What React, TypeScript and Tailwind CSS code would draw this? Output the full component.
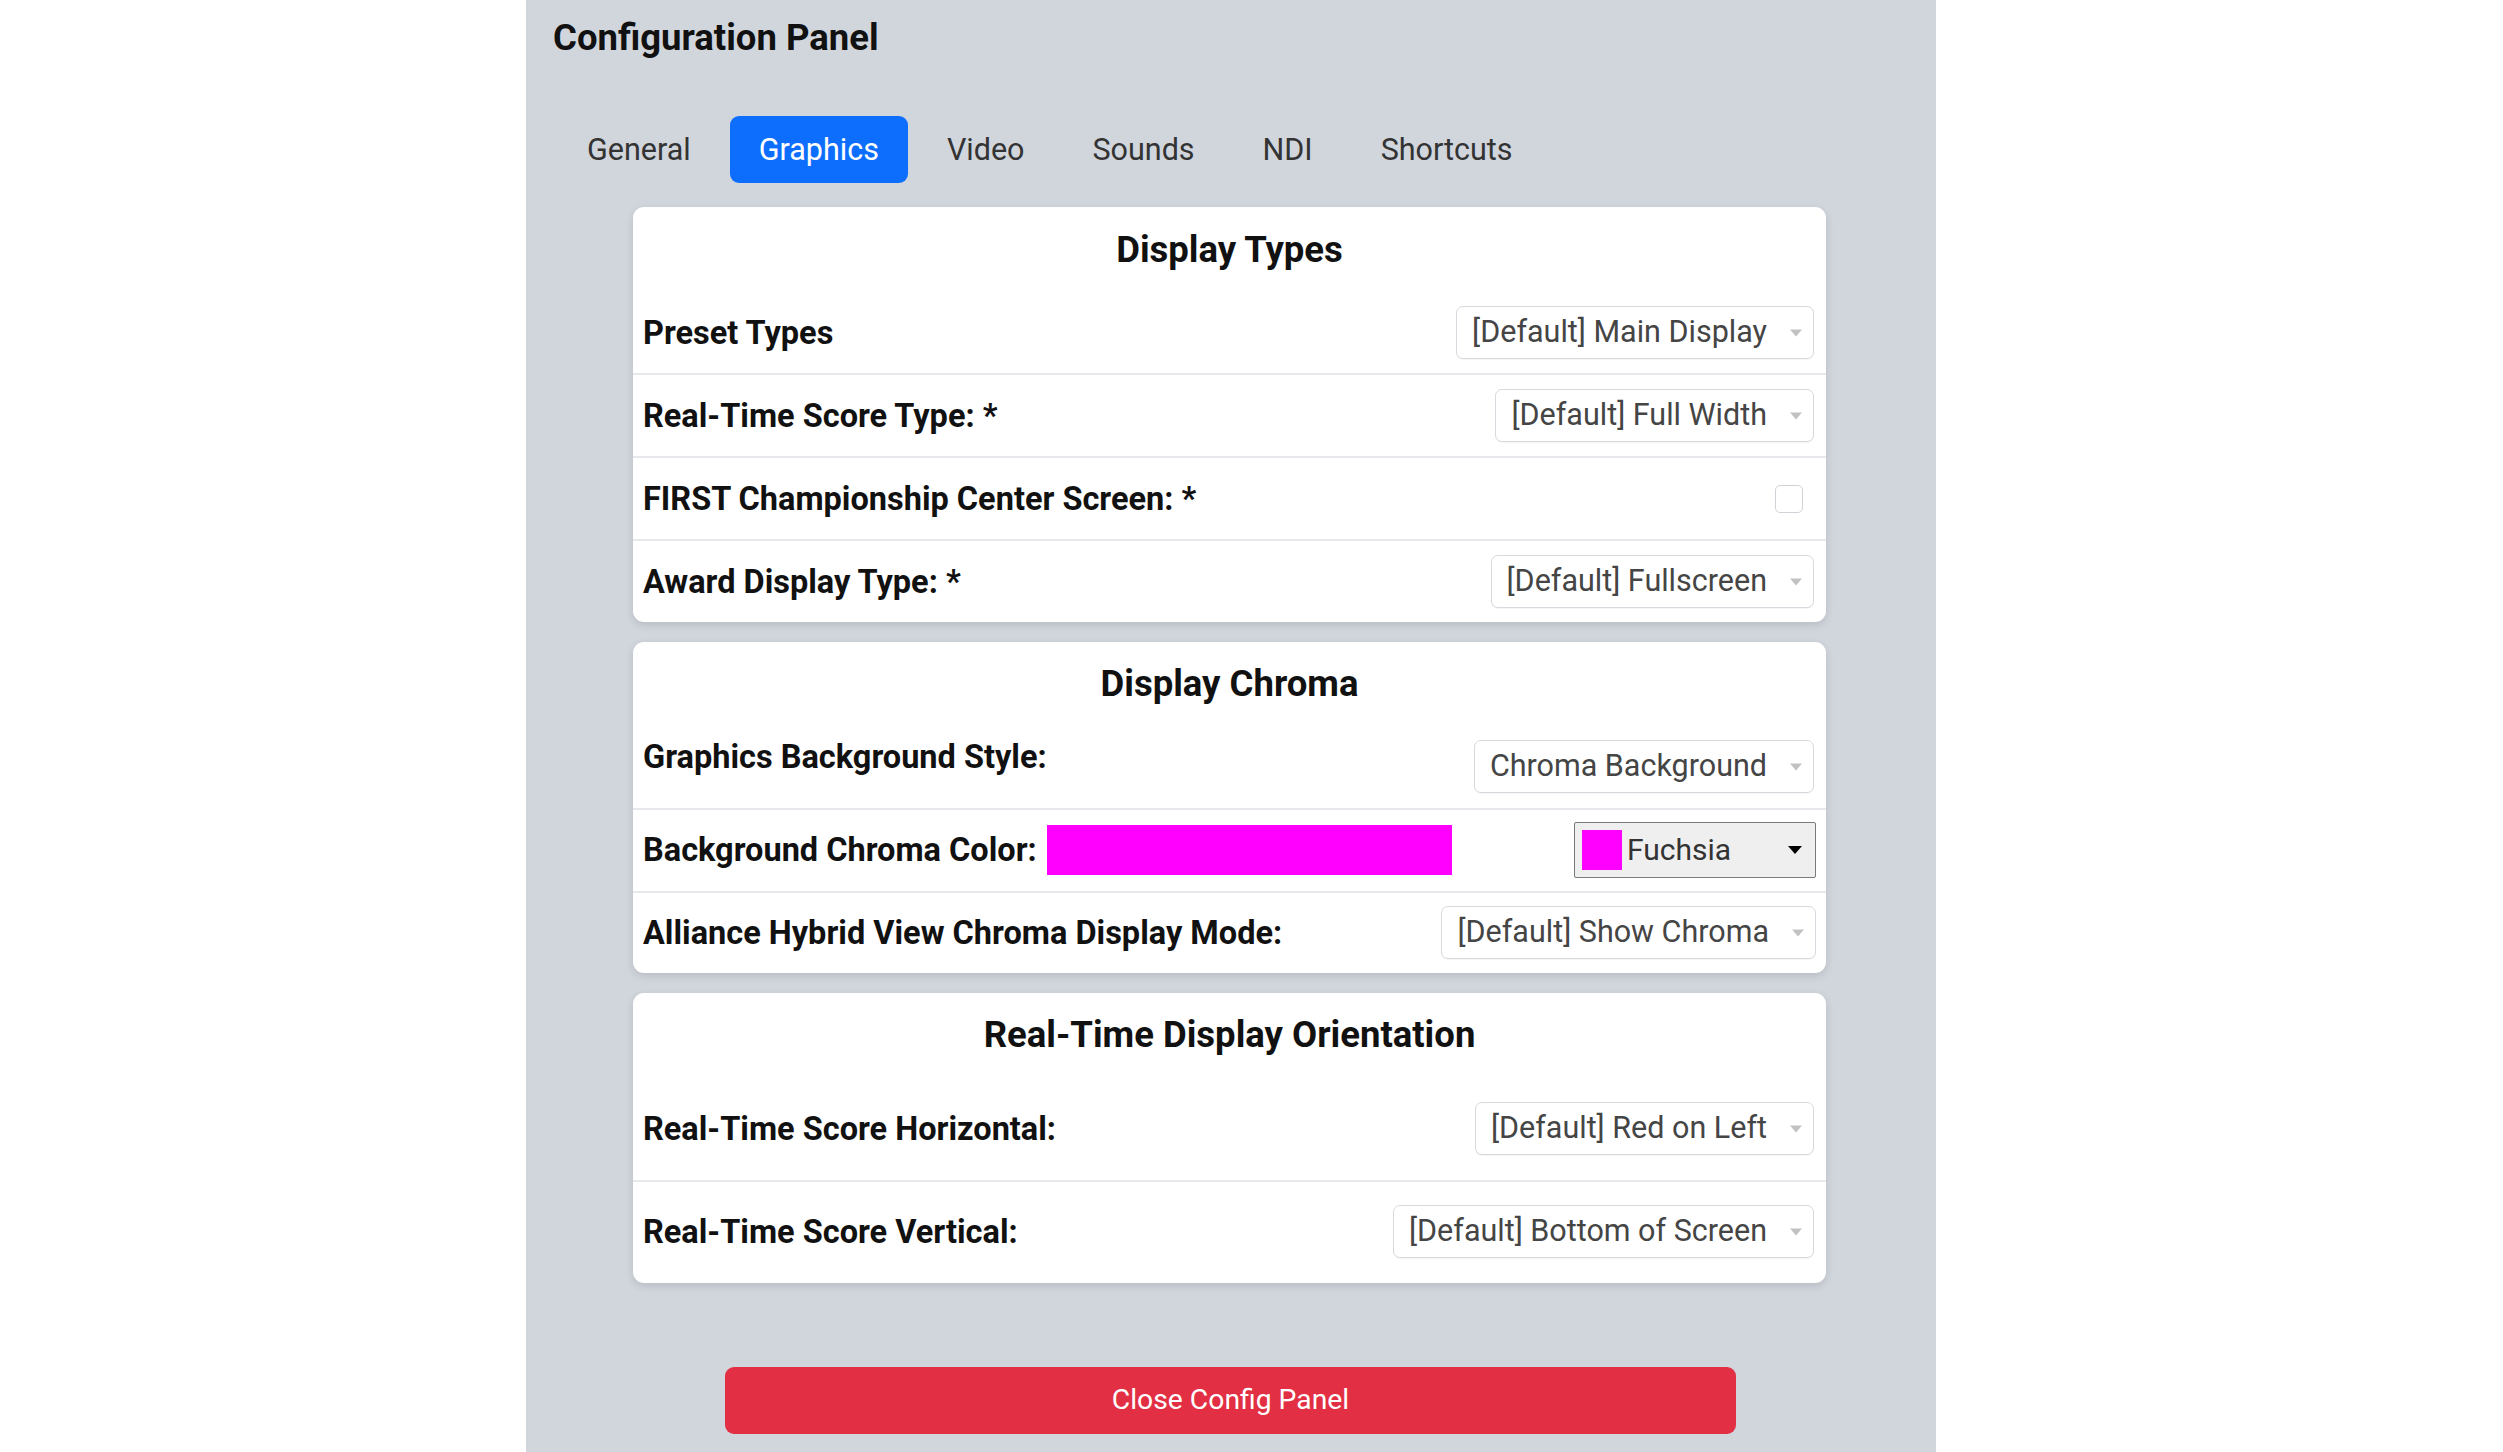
import React from "react";

type SelectProps = { value: string };

function FakeSelect({ value }: SelectProps) {
  return (
    <div className="relative inline-flex h-[53px] shrink-0 items-center rounded-[7px] border border-[#d6d9dd] bg-white pl-[15px] pr-[46px] text-[30.5px] text-[#454545] shadow-[0_1px_1px_rgba(0,0,0,0.04)]">
      <span className="whitespace-nowrap leading-none">{value}</span>
      <span className="absolute right-[11px] top-1/2 -translate-y-1/2 border-x-[6px] border-t-[7px] border-x-transparent border-t-[#c2c2c2]" />
    </div>
  );
}

function Label({ children }: { children: React.ReactNode }) {
  return <span className="whitespace-nowrap text-[32.5px] font-bold leading-[34px] text-[#111]">{children}</span>;
}

function CardHeading({ children }: { children: React.ReactNode }) {
  return (
    <div className="flex h-[83px] items-center justify-center pt-[2px] text-[36.5px] font-bold text-[#111]">
      {children}
    </div>
  );
}

const tabs = ["General", "Graphics", "Video", "Sounds", "NDI", "Shortcuts"];

export default function App() {
  return (
    <div className="min-h-screen w-full bg-white font-['Roboto','Liberation_Sans',sans-serif]">
      <div className="ml-[526px] flex min-h-[1452px] w-[1410px] flex-col bg-[#d1d6dd]">
        <h1 className="pl-[27px] pt-[17px] text-[36.5px] font-bold leading-[42px] text-[#111]">Configuration Panel</h1>

        <nav className="mt-[57px] flex gap-[10px] pl-[32px]">
          {tabs.map((t) => (
            <div
              key={t}
              className={
                t === "Graphics"
                  ? "flex h-[67px] items-center rounded-[9px] bg-[#0d6efd] px-[29px] text-[30.5px] text-white"
                  : "flex h-[67px] items-center rounded-[9px] px-[29px] text-[30.5px] text-[#333]"
              }
            >
              {t}
            </div>
          ))}
        </nav>

        <div className="ml-[107px] mt-[24px] flex w-[1193px] flex-col gap-[20px]">
          {/* Display Types */}
          <section className="rounded-[11px] bg-white shadow-[0_3px_8px_rgba(0,0,0,0.12)]">
            <div className="flex h-[85px] items-center justify-center pt-[2px] text-[36.5px] font-bold text-[#111]">
              Display Types
            </div>
            <div className="flex items-center justify-between py-[14px] pl-[10px] pr-[12px]">
              <Label>Preset Types</Label>
              <FakeSelect value="[Default] Main Display" />
            </div>
            <div className="flex items-center justify-between border-t-2 border-[#e6e8eb] py-[14px] pl-[10px] pr-[12px]">
              <Label>Real-Time Score Type: *</Label>
              <FakeSelect value="[Default] Full Width" />
            </div>
            <div className="flex h-[83px] items-center justify-between border-t-2 border-[#e6e8eb] pl-[10px] pr-[23px]">
              <Label>FIRST Championship Center Screen: *</Label>
              <span className="h-[28px] w-[28px] rounded-[5px] border border-[#cfd3d8] bg-white" />
            </div>
            <div className="flex items-center justify-between border-t-2 border-[#e6e8eb] py-[14px] pl-[10px] pr-[12px]">
              <Label>Award Display Type: *</Label>
              <FakeSelect value="[Default] Fullscreen" />
            </div>
          </section>

          {/* Display Chroma */}
          <section className="rounded-[11px] bg-white shadow-[0_3px_8px_rgba(0,0,0,0.12)]">
            <CardHeading>Display Chroma</CardHeading>
            <div className="flex items-start justify-between py-[15px] pl-[10px] pr-[12px]">
              <Label>Graphics Background Style:</Label>
              <FakeSelect value="Chroma Background" />
            </div>
            <div className="flex items-center border-t-2 border-[#e6e8eb] pb-[13px] pl-[10px] pr-[10px] pt-[12px]">
              <Label>Background Chroma Color:</Label>
              <span className="ml-[10px] h-[50px] w-[405px] bg-[#ff00ff]" />
              <div className="ml-auto flex h-[56px] w-[242px] items-center rounded-[2px] border-[1.5px] border-[#7a7a7a] bg-[#efefef] pl-[7px] pr-[13px]">
                <span className="h-[40px] w-[40px] bg-[#ff00ff]" />
                <span className="ml-[5px] text-[30px] leading-none text-[#333]">Fuchsia</span>
                <span className="ml-auto border-x-[7px] border-t-[8px] border-x-transparent border-t-black" />
              </div>
            </div>
            <div className="flex items-center justify-between border-t-2 border-[#e6e8eb] pb-[14px] pl-[10px] pr-[10px] pt-[13px]">
              <Label>Alliance Hybrid View Chroma Display Mode:</Label>
              <FakeSelect value="[Default] Show Chroma" />
            </div>
          </section>

          {/* Real-Time Display Orientation */}
          <section className="rounded-[11px] bg-white shadow-[0_3px_8px_rgba(0,0,0,0.12)]">
            <CardHeading>Real-Time Display Orientation</CardHeading>
            <div className="flex items-center justify-between pb-[25px] pl-[10px] pr-[12px] pt-[26px]">
              <Label>Real-Time Score Horizontal:</Label>
              <FakeSelect value="[Default] Red on Left" />
            </div>
            <div className="flex items-center justify-between border-t-2 border-[#e6e8eb] pb-[25px] pl-[10px] pr-[12px] pt-[23px]">
              <Label>Real-Time Score Vertical:</Label>
              <FakeSelect value="[Default] Bottom of Screen" />
            </div>
          </section>
        </div>

        <button className="ml-[199px] mt-[84px] flex h-[67px] w-[1011px] items-center justify-center rounded-[9px] bg-[#e22f43] text-[28.3px] text-white">
          Close Config Panel
        </button>
      </div>
    </div>
  );
}
